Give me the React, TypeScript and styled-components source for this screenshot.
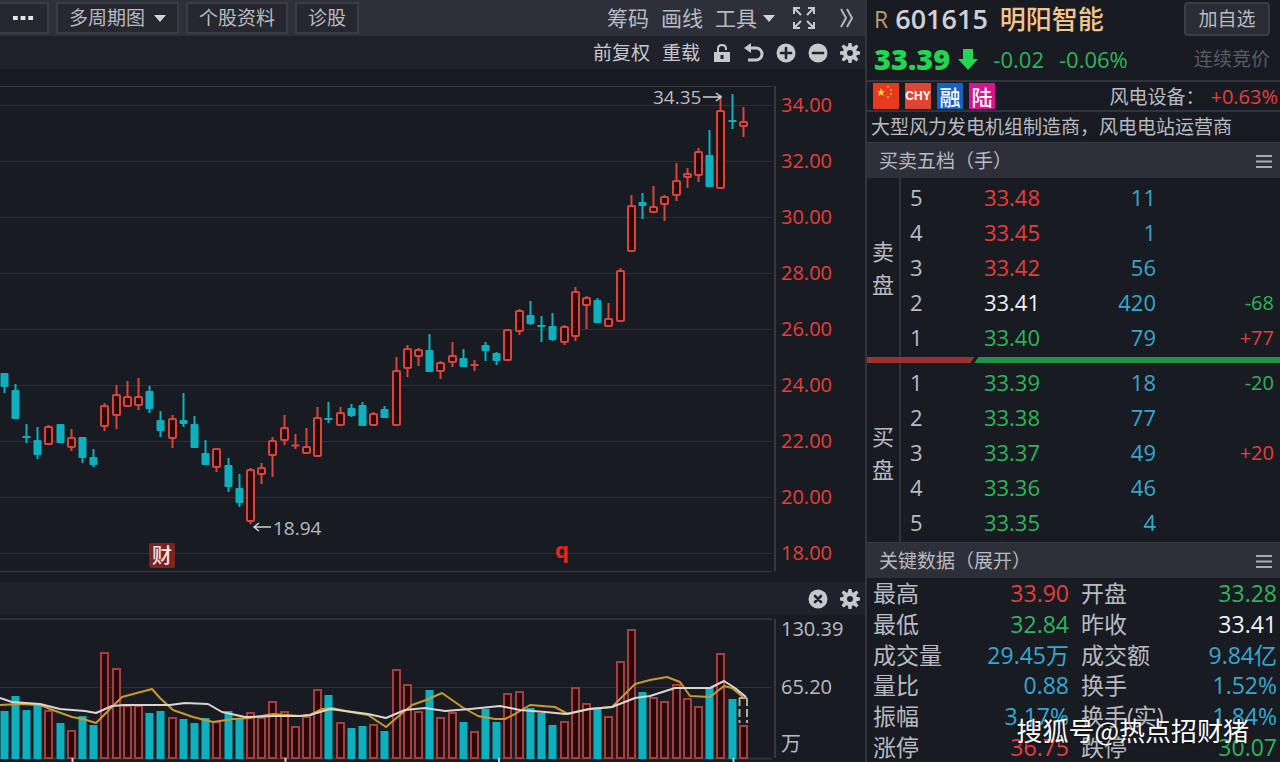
import React from "react";
import styled, { createGlobalStyle } from "styled-components";

const color = {
  bg: "#191b22",
  bar: "#20222b",
  head: "#2e3039",
  line: "#33353e",
  grid: "#2e3038",
  text: "#b9bbc2",
  red: "#e63e38",
  green: "#2fb559",
  cyan: "#35a8cf",
  candle: "#0fb0bd",
  white: "#f2f2f4",
};

const GlobalStyle = createGlobalStyle`
  *, *::before, *::after { box-sizing: border-box; }
  body {
    margin: 0;
    background: ${color.bg};
    color: ${color.text};
    font-family: "Open Sans", "Noto Sans CJK SC", sans-serif;
    font-size: 19px;
  }
  button { font: inherit; color: inherit; background: none; border: 0; padding: 0; cursor: pointer; }
  h1, h2, p, dl, dd, dt { margin: 0; font-weight: 400; font-size: inherit; }
`;

const Page = styled.div`
  position: relative;
  display: flex;
  min-height: 100vh;
  overflow: hidden;
`;

const ChartPanel = styled.main`
  flex: 1;
  min-width: 0;
  display: flex;
  flex-direction: column;
`;

const TopBar = styled.header`
  display: flex;
  align-items: center;
  justify-content: space-between;
  height: 36px;
  padding-right: 11px;
  background: ${color.head};
`;

const Tabs = styled.nav`
  display: flex;
  gap: 7px;
`;

const TabButton = styled.button`
  display: flex;
  align-items: center;
  gap: 9px;
  height: 32px;
  padding: 0 11px;
  border: 2px solid #3a3c46;
  background: #27282f;
  line-height: 28px;
`;

const MoreButton = styled(TabButton)`
  width: 49px;
  border-left: 0;
  padding: 0 13px;
`;

const Tools = styled.div<{ $gap: number }>`
  display: flex;
  align-items: center;
  gap: ${(p) => p.$gap}px;
`;

const ToolButton = styled.button<{ $size?: number }>`
  display: flex;
  align-items: center;
  gap: 6px;
  font-size: ${(p) => p.$size ?? 19}px;
  line-height: 28px;
  white-space: nowrap;
`;

const IconGroup = styled(Tools)`
  margin-left: 5px;
`;

const SubBar = styled.div`
  display: flex;
  align-items: center;
  justify-content: flex-end;
  gap: 12px;
  height: 33px;
  padding-right: 5px;
  background: ${color.bar};
  color: #c6c8ce;
`;

const ChartRow = styled.section<{ $height: number }>`
  display: flex;
  height: ${(p) => p.$height}px;
`;

const Plot = styled.svg`
  flex: 1;
  min-width: 0;
  height: 100%;
  display: block;
`;

const PriceAxis = styled.div`
  width: 89px;
  padding: 8px 0 0 5px;
  color: ${color.red};
  font-size: 20px;
  line-height: 56px;
`;

const VolumeAxis = styled.div`
  display: flex;
  flex-direction: column;
  justify-content: space-between;
  width: 89px;
  padding: 0 0 4px 5px;
  font-size: 20px;
  line-height: 28px;
`;

const QuotePanel = styled.aside`
  width: 415px;
  flex: none;
  display: flex;
  flex-direction: column;
  border-left: 2px solid ${color.line};
`;

const TitleRow = styled.div`
  display: flex;
  align-items: center;
  height: 38px;
  padding: 0 10px 0 7px;
`;

const Market = styled.span`
  color: #c79a6a;
  font-size: 23px;
`;

const Code = styled.span`
  margin-left: 7px;
  font-size: 27px;
  font-weight: 600;
  line-height: 36px;
  color: #cfd1d8;
`;

const Name = styled.h1`
  && {
    flex: 1;
    margin-left: 12px;
    font-size: 26px;
    font-weight: 500;
    line-height: 36px;
    color: #f3c48c;
  }
`;

const AddButton = styled.button`
  height: 34px;
  width: 86px;
  border: 2px solid #3b3d46;
  border-radius: 4px;
  background: #2b2d35;
  line-height: 28px;
`;

const PriceRow = styled.div`
  display: flex;
  align-items: center;
  height: 42px;
  padding: 0 10px 0 7px;
  color: ${color.green};
  font-size: 22px;
  line-height: 36px;
`;

const LastPrice = styled.strong`
  font-size: 29px;
  font-weight: 800;
  color: #22d552;
  margin-right: 8px;
`;

const Change = styled.span`
  margin-left: 15px;
`;

const Phase = styled.span`
  margin-left: auto;
  font-size: 19px;
  color: #595b64;
`;

const TagRow = styled.div`
  display: flex;
  align-items: center;
  gap: 6px;
  height: 32px;
  padding: 0 2px 0 6px;
  border-top: 2px solid ${color.line};
  border-bottom: 2px solid ${color.line};
`;

const Tag = styled.span<{ $bg: string; $narrow?: boolean }>`
  display: flex;
  align-items: center;
  justify-content: center;
  width: 26px;
  height: 26px;
  background: ${(p) => p.$bg};
  color: #fff;
  font-family: ${(p) => (p.$narrow ? '"Liberation Sans Narrow", "Liberation Sans"' : '"Noto Sans CJK SC"')}, sans-serif;
  font-size: ${(p) => (p.$narrow ? 12 : 21)}px;
  font-weight: ${(p) => (p.$narrow ? 700 : 500)};
  line-height: 26px;
`;

const Sector = styled.span`
  margin-left: auto;
  white-space: nowrap;
`;

const SectorChange = styled.span`
  color: ${color.red};
  font-size: 20px;
`;

const Summary = styled.p`
  height: 30px;
  padding-left: 4px;
  line-height: 30px;
  white-space: nowrap;
`;

const SectionHead = styled.h2`
  && {
    display: flex;
    align-items: center;
    justify-content: space-between;
    height: 36px;
    padding: 0 8px 0 12px;
    background: ${color.head};
    border-top: 1px solid #383a43;
    line-height: 34px;
  }
`;

const Side = styled.section`
  display: flex;
  height: 179px;
`;

const SideLabel = styled.div`
  display: flex;
  flex-direction: column;
  justify-content: center;
  align-items: center;
  width: 34px;
  border-right: 2px solid ${color.line};
  font-size: 22px;
  line-height: 33px;
`;

const Levels = styled.table`
  flex: 1;
  align-self: flex-start;
  margin-top: 2px;
  border-collapse: collapse;
  table-layout: fixed;
  font-size: 22px;
  line-height: 35px;
  th, td { padding: 0; height: 35px; font-weight: 400; text-align: right; }
`;

const LevelCell = styled.th`
  && {
    width: 60px;
    padding-left: 9px;
    text-align: left;
  }
`;

const PriceCell = styled.td<{ $c: string }>`
  width: 79px;
  color: ${(p) => p.$c};
`;

const VolumeCell = styled.td`
  width: 116px;
  color: ${color.cyan};
`;

const DeltaCell = styled.td<{ $c: string }>`
  && {
    padding-right: 6px;
    font-size: 20px;
    color: ${(p) => p.$c};
  }
`;

const Ratio = styled.div`
  display: flex;
  height: 6px;
`;

const SellShare = styled.div`
  width: 26%;
  background: #9c312d;
  clip-path: polygon(0 0, 100% 0, calc(100% - 4px) 100%, 0 100%);
`;

const BuyShare = styled.div`
  flex: 1;
  background: #1f9348;
  clip-path: polygon(4px 0, 100% 0, 100% 100%, 0 100%);
`;

const Facts = styled.dl`
  flex: 1;
  display: grid;
  grid-template-columns: 196px 1fr;
  grid-auto-rows: 1fr;
  column-gap: 12px;
  padding: 0 3px 0 6px;
  font-size: 23px;
`;

const Fact = styled.div`
  display: flex;
  align-items: center;
  justify-content: space-between;
  line-height: 30px;
  white-space: nowrap;
`;

const FactValue = styled.dd<{ $c: string }>`
  color: ${(p) => p.$c};
`;

const Watermark = styled.div`
  position: absolute;
  right: 31px;
  bottom: 14px;
  font-family: "Noto Sans CJK SC", sans-serif;
  font-size: 26px;
  line-height: 36px;
  color: #fff;
  text-shadow: 0 1px 2px rgba(0, 0, 0, 0.6);
`;

type Kind = "r" | "c";
/* kind, high, body top, body bottom, low, volume top */
const candles: [Kind, number, number, number, number, number][] = [
  ["c", 373, 373, 387, 393, 711], ["c", 384, 390, 419, 419, 696], ["c", 424, 436, 438, 443, 710],
  ["c", 427, 440, 455, 459, 705], ["r", 425, 426, 444, 445, 710], ["c", 424, 424, 443, 443, 723],
  ["r", 429, 437, 447, 451, 730], ["c", 437, 437, 458, 463, 716], ["c", 449, 457, 465, 467, 725],
  ["r", 403, 405, 426, 431, 652], ["r", 385, 394, 415, 429, 668], ["r", 381, 396, 406, 406, 705],
  ["r", 378, 396, 405, 410, 705], ["c", 386, 391, 409, 413, 713], ["c", 411, 420, 431, 437, 711],
  ["r", 415, 418, 438, 448, 717], ["c", 393, 420, 424, 427, 719], ["c", 416, 424, 448, 448, 723],
  ["c", 440, 453, 465, 465, 718], ["r", 448, 448, 467, 472, 721], ["c", 458, 465, 487, 492, 711],
  ["c", 474, 488, 503, 507, 718], ["r", 468, 469, 521, 524, 712], ["r", 463, 467, 474, 484, 717],
  ["r", 437, 440, 455, 477, 701], ["r", 415, 427, 440, 445, 711], ["r", 434, 444, 447, 449, 726],
  ["r", 428, 446, 453, 453, 716], ["r", 407, 417, 456, 456, 689], ["c", 402, 418, 420, 423, 695],
  ["r", 407, 412, 425, 425, 722], ["c", 404, 408, 416, 417, 728], ["c", 402, 405, 426, 426, 726],
  ["r", 412, 413, 425, 425, 724], ["c", 406, 409, 418, 418, 731], ["r", 357, 370, 425, 425, 669],
  ["r", 345, 348, 368, 377, 684], ["r", 348, 349, 356, 366, 711], ["c", 334, 350, 372, 372, 690],
  ["r", 361, 362, 371, 379, 717], ["r", 342, 355, 362, 367, 712], ["c", 349, 358, 367, 367, 722],
  ["r", 360, 364, 366, 371, 731], ["c", 342, 345, 351, 361, 709], ["c", 352, 353, 361, 365, 722],
  ["r", 329, 329, 360, 360, 693], ["r", 309, 310, 331, 335, 691], ["c", 301, 315, 324, 325, 708],
  ["c", 316, 325, 327, 342, 713], ["c", 313, 326, 340, 341, 725], ["r", 325, 326, 342, 345, 721],
  ["r", 287, 291, 336, 341, 687], ["r", 296, 297, 305, 329, 703], ["c", 298, 300, 323, 323, 709],
  ["r", 303, 318, 326, 326, 716], ["r", 268, 270, 321, 321, 661], ["r", 195, 205, 251, 251, 629],
  ["c", 193, 202, 206, 219, 692], ["r", 186, 206, 212, 212, 697], ["r", 195, 196, 204, 221, 701],
  ["r", 163, 180, 195, 201, 684], ["r", 168, 173, 177, 188, 698], ["r", 148, 151, 175, 182, 706],
  ["c", 130, 155, 187, 187, 687], ["r", 95, 110, 188, 188, 653], ["c", 94, 120, 122, 129, 699],
  ["r", 107, 121, 126, 137, 725],
];

const centre = (i: number) => Math.round(3.5 + i * 11.2) + 0.5;

const shortAverage =
  "0,705 20,704 40,705 50,709 72,717 83,719 96,723 107,712 122,697 137,693 152,689 160,698 173,710 193,717 213,722 233,719 250,718 273,714 300,716 310,715 322,709 332,708 350,712 368,715 386,727 400,715 412,705 426,700 442,693 462,707 478,716 495,719 505,719 515,714 530,705 555,707 568,714 588,709 612,707 620,699 635,684 650,680 667,677 680,682 690,696 710,697 724,686 732,688 743,697";
const longAverage =
  "0,698 12,702 40,704 60,709 85,711 96,713 112,706 125,705 170,705 185,703 208,704 222,712 245,717 275,716 300,716 310,715 330,709 368,714 386,718 405,710 425,708 445,711 470,709 500,706 520,710 545,712 566,714 590,709 612,707 635,698 650,696 675,688 710,688 724,681 735,688 746,697";

function PricePlot() {
  return (
    <Plot viewBox="0 69 776 513" preserveAspectRatio="xMaxYMin slice" role="img" aria-label="K线图">
      {[86, 105, 161, 217, 273, 329, 385, 441, 497, 553, 571].map((y) => (
        <path key={y} d={`M0 ${y}.5H772`} stroke={y === 86 || y === 571 ? "#373942" : color.grid} strokeWidth="1" />
      ))}
      <path d="M775 86V571" stroke="#373942" strokeWidth="2" />
      {candles.map(([kind, high, top, bottom, low], i) => {
        const x = centre(i);
        const c = kind === "r" ? "#d8453c" : color.candle;
        const thin = bottom - top < 4;
        return (
          <g key={i} stroke={c} strokeWidth="2">
            <path d={`M${x} ${high}V${top}M${x} ${bottom}V${low}`} />
            {thin ? (
              <path d={`M${x - 4} ${(top + bottom) / 2}h8M${x} ${top}V${bottom}`} />
            ) : kind === "r" ? (
              <rect x={x - 3.5} y={top + 1} width="7" height={bottom - top - 1} rx="1" fill="#2b0709" />
            ) : (
              <rect x={x - 4} y={top} width="8" height={bottom - top} rx="1" fill={c} strokeWidth="0" />
            )}
          </g>
        );
      })}
      <g fill={color.text} stroke="none" fontSize="19">
        <text x="653" y="104">34.35</text>
        <text x="273" y="535">18.94</text>
      </g>
      <g stroke="#d0d2d8" strokeWidth="1.5" fill="none">
        <path d="M703 97H721M716 93L721 97L716 101" />
        <path d="M271 527H254M259 523L254 527L259 531" />
      </g>
      <rect x="149" y="543" width="26" height="25" rx="2" fill="#7c2225" />
      <text x="162" y="563" fontSize="20" textAnchor="middle" fill="#f4e4e2" fontWeight="500">财</text>
      <text x="562" y="558" fontSize="22" textAnchor="middle" fill="#e8261f" fontWeight="700">q</text>
    </Plot>
  );
}

function VolumePlot() {
  return (
    <Plot viewBox="0 615 776 147" preserveAspectRatio="xMaxYMin slice" role="img" aria-label="成交量">
      <path d="M0 619H772M0 758.5H772" stroke="#30323b" strokeWidth="2" />
      <path d="M0 687.5H772" stroke={color.grid} strokeWidth="1" />
      <path d="M775 619V758" stroke="#373942" strokeWidth="2" />
      {candles.map(([kind, , , , , top], i) => {
        const x = centre(i);
        return kind === "r" ? (
          <rect key={i} x={x - 3.5} y={top + 1} width="7" height={757 - top} fill="#2b070a" stroke="#a5403e" strokeWidth="2" />
        ) : (
          <rect key={i} x={x - 4} y={top} width="8" height={759 - top} fill={color.candle} />
        );
      })}
      <path d="M739.5 698V723M747 698V723M739 698H748" stroke="#b9a994" strokeWidth="2" strokeDasharray="8 3" fill="none" />
      <polyline points={shortAverage} fill="none" stroke="#c9992f" strokeWidth="2" strokeLinejoin="round" />
      <polyline points={longAverage} fill="none" stroke="#d9d6d2" strokeWidth="2" strokeLinejoin="round" />
      <path d="M72.5 758V762M285.5 758V762M499 758V762M733.5 758V762" stroke="#d8c8c0" strokeWidth="2" />
    </Plot>
  );
}

const Caret = () => (
  <svg width="12" height="7" viewBox="0 0 12 7" aria-hidden="true"><path d="M0 0H12L6 7Z" fill="#d0d2d8" /></svg>
);

const Gear = () => (
  <svg width="20" height="20" viewBox="-10 -10 20 20" aria-hidden="true">
    <g fill="currentColor">
      {[0, 45, 90, 135, 180, 225, 270, 315].map((a) => (
        <path key={a} d="M-2.4 -5L-1.4 -10.5H1.4L2.4 -5Z" transform={`rotate(${a})`} />
      ))}
    </g>
    <circle r="5" fill="none" stroke="currentColor" strokeWidth="4" />
  </svg>
);

const Disc = ({ d }: { d: string }) => (
  <svg width="20" height="20" viewBox="-10 -10 20 20" aria-hidden="true">
    <circle r="9.5" fill="currentColor" />
    <path d={d} stroke={color.bar} strokeWidth="2.6" strokeLinecap="round" />
  </svg>
);

const Menu = () => (
  <svg width="16" height="13" viewBox="0 0 16 13" aria-hidden="true">
    <path d="M0 1H16M0 6.5H16M0 12H16" stroke="#a9abb2" strokeWidth="2" />
  </svg>
);

const { red: R, green: G, cyan: C, white: W } = color;

const sells: [string, string, string, string, string][] = [
  ["5", "33.48", R, "11", ""], ["4", "33.45", R, "1", ""], ["3", "33.42", R, "56", ""],
  ["2", "33.41", W, "420", "-68"], ["1", "33.40", G, "79", "+77"],
];
const buys: [string, string, string, string, string][] = [
  ["1", "33.39", G, "18", "-20"], ["2", "33.38", G, "77", ""], ["3", "33.37", G, "49", "+20"],
  ["4", "33.36", G, "46", ""], ["5", "33.35", G, "4", ""],
];
const facts: [string, string, string][] = [
  ["最高", "33.90", R], ["开盘", "33.28", G],
  ["最低", "32.84", G], ["昨收", "33.41", W],
  ["成交量", "29.45万", C], ["成交额", "9.84亿", C],
  ["量比", "0.88", C], ["换手", "1.52%", C],
  ["振幅", "3.17%", C], ["换手(实)", "1.84%", C],
  ["涨停", "36.75", R], ["跌停", "30.07", G],
];

function BookSide({ label, rows }: { label: string; rows: typeof sells }) {
  return (
    <Side>
      <SideLabel>
        {label.split("").map((ch) => <span key={ch}>{ch}</span>)}
      </SideLabel>
      <Levels aria-label={label}>
        <tbody>
          {rows.map(([level, price, c, volume, delta]) => (
            <tr key={level}>
              <LevelCell scope="row">{level}</LevelCell>
              <PriceCell $c={c}>{price}</PriceCell>
              <VolumeCell>{volume}</VolumeCell>
              <DeltaCell $c={delta.startsWith("+") ? R : G}>{delta}</DeltaCell>
            </tr>
          ))}
        </tbody>
      </Levels>
    </Side>
  );
}

export default function App() {
  return (
    <Page>
      <GlobalStyle />
      <ChartPanel>
        <TopBar>
          <Tabs>
            <MoreButton aria-label="更多">
              <svg width="22" height="4" viewBox="0 0 22 4"><path d="M0 0h5v4H0zM8 0h5v4H8zM16 0h5v4h-5z" fill="#e4e5e9" /></svg>
            </MoreButton>
            <TabButton>多周期图<Caret /></TabButton>
            <TabButton>个股资料</TabButton>
            <TabButton>诊股</TabButton>
          </Tabs>
          <Tools $gap={12}>
            <ToolButton $size={21}>筹码</ToolButton>
            <ToolButton $size={21}>画线</ToolButton>
            <ToolButton $size={21}>工具<Caret /></ToolButton>
            <IconGroup $gap={24}>
              <ToolButton aria-label="全屏">
                <svg width="24" height="24" viewBox="0 0 24 24" fill="none" stroke="#c6c8ce" strokeWidth="2">
                  <path d="M2 8V2H8M16 2H22V8M22 16V22H16M8 22H2V16" />
                  <path d="M2 2L9 9M22 2L15 9M22 22L15 15M2 22L9 15" />
                </svg>
              </ToolButton>
              <ToolButton aria-label="展开">
                <svg width="14" height="20" viewBox="0 0 14 20" fill="none" stroke="#b4b6be" strokeWidth="2">
                  <path d="M1 1L6 10L1 19M7 1L12 10L7 19" />
                </svg>
              </ToolButton>
            </IconGroup>
          </Tools>
        </TopBar>
        <SubBar>
          <ToolButton>前复权</ToolButton>
          <ToolButton>重载</ToolButton>
          <ToolButton aria-label="解锁">
            <svg width="20" height="20" viewBox="0 0 20 20">
              <path d="M6 9V6Q6 2 10 2T14 6V7" fill="none" stroke="currentColor" strokeWidth="2" />
              <path d="M2 9H18V19H2Z" fill="currentColor" />
              <path d="M10 12V16" stroke={color.bar} strokeWidth="3" />
            </svg>
          </ToolButton>
          <ToolButton aria-label="撤销">
            <svg width="20" height="20" viewBox="0 0 20 20" fill="none" stroke="currentColor" strokeWidth="3">
              <path d="M4 5H12A6 6 0 0 1 12 17H4" />
              <path d="M0 5L7 0V10Z" fill="currentColor" stroke="none" />
            </svg>
          </ToolButton>
          <ToolButton aria-label="放大"><Disc d="M-5 0H5M0 -5V5" /></ToolButton>
          <ToolButton aria-label="缩小"><Disc d="M-5 0H5" /></ToolButton>
          <ToolButton aria-label="设置"><Gear /></ToolButton>
        </SubBar>
        <ChartRow $height={513}>
          <PricePlot />
          <PriceAxis>
            {["34.00", "32.00", "30.00", "28.00", "26.00", "24.00", "22.00", "20.00", "18.00"].map((p) => (
              <div key={p}>{p}</div>
            ))}
          </PriceAxis>
        </ChartRow>
        <SubBar>
          <ToolButton aria-label="关闭"><Disc d="M-3 -3L3 3M3 -3L-3 3" /></ToolButton>
          <ToolButton aria-label="指标设置"><Gear /></ToolButton>
        </SubBar>
        <ChartRow $height={147}>
          <VolumePlot />
          <VolumeAxis>
            <span>130.39</span>
            <span>65.20</span>
            <span>万</span>
          </VolumeAxis>
        </ChartRow>
      </ChartPanel>

      <QuotePanel>
        <TitleRow>
          <Market>R</Market>
          <Code>601615</Code>
          <Name>明阳智能</Name>
          <AddButton>加自选</AddButton>
        </TitleRow>
        <PriceRow>
          <LastPrice>33.39</LastPrice>
          <svg width="20" height="21" viewBox="0 0 20 21" aria-hidden="true"><path d="M5 0H15V10H20L10 21L0 10H5Z" fill="#22d552" /></svg>
          <Change>-0.02</Change>
          <Change>-0.06%</Change>
          <Phase>连续竞价</Phase>
        </PriceRow>
        <TagRow>
          <Tag $bg="#e8391f">
            <svg width="26" height="26" viewBox="0 0 26 26" aria-hidden="true">
              <path d="M8 5l1.2 3H12l-2.300 2 1 3L8 11.300 5.300 13l1-3L4 8h2.800z" fill="#ffd93b" />
              <path d="M14 3h2v2h-2zM17 6h2v2h-2zM17 10h2v2h-2zM14 13h2v2h-2z" fill="#f0a030" />
            </svg>
          </Tag>
          <Tag $bg="#e04434" $narrow>CHY</Tag>
          <Tag $bg="#1463c4">融</Tag>
          <Tag $bg="#d8138c">陆</Tag>
          <Sector>风电设备：</Sector>
          <SectorChange>+0.63%</SectorChange>
        </TagRow>
        <Summary>大型风力发电机组制造商，风电电站运营商</Summary>
        <SectionHead>买卖五档（手）<button aria-label="五档菜单"><Menu /></button></SectionHead>
        <BookSide label="卖盘" rows={sells} />
        <Ratio><SellShare /><BuyShare /></Ratio>
        <BookSide label="买盘" rows={buys} />
        <SectionHead>关键数据（展开）<button aria-label="数据菜单"><Menu /></button></SectionHead>
        <Facts>
          {facts.map(([k, v, c]) => (
            <Fact key={k}>
              <dt>{k}</dt>
              <FactValue $c={c}>{v}</FactValue>
            </Fact>
          ))}
        </Facts>
      </QuotePanel>
      <Watermark>搜狐号@热点招财猪</Watermark>
    </Page>
  );
}
